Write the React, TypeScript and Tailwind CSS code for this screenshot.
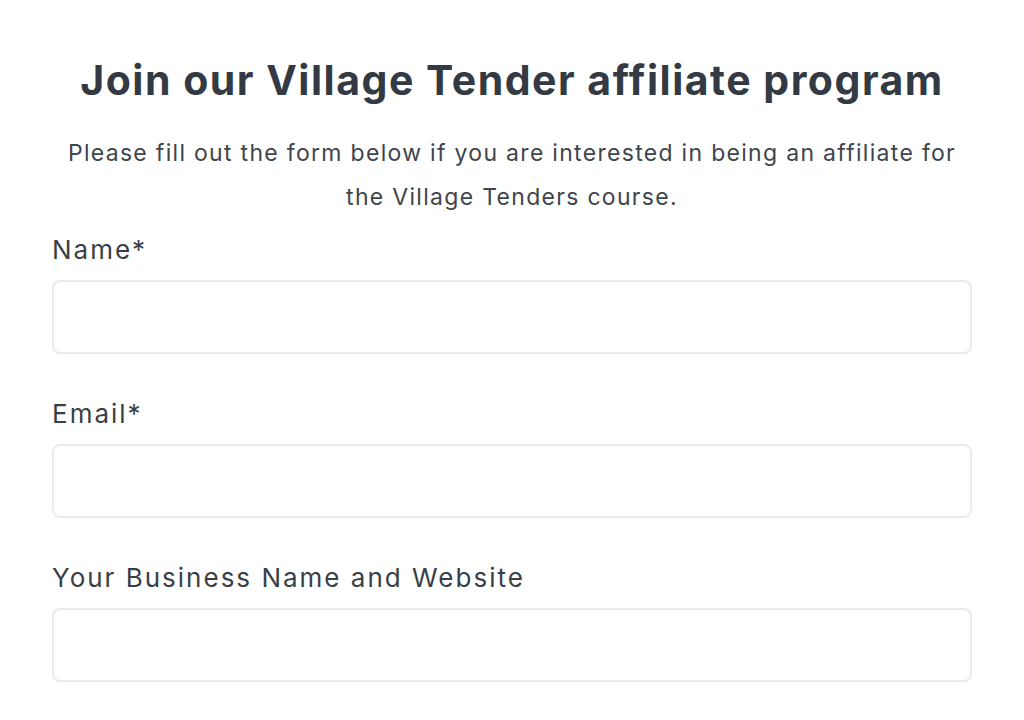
import React from 'react';

const fields = [
  { label: 'Name*', type: 'text' },
  { label: 'Email*', type: 'email' },
  { label: 'Your Business Name and Website', type: 'text' },
];

const App = () => {
  return (
    <div className="min-h-[720px] bg-white px-[52px] pt-[54px] text-[#3a3f47] font-['Inter',sans-serif] [font-variant-ligatures:none]">
      {/* Header */}
      <h1 className="text-center text-[41px] font-bold leading-[52px] tracking-[1.5px] text-[#333a44]">
        Join our Village Tender affiliate program
      </h1>
      <p className="mt-[25px] text-center text-[23px] leading-[44px] tracking-[1.3px] text-[#40454c]">
        Please fill out the form below if you are interested in being an affiliate for the Village Tenders course.
      </p>

      {/* Form */}
      <form className="mt-[11px] flex flex-col">
        {fields.map((f, i) => (
          <div key={f.label} className={i > 0 ? 'mt-[40px]' : ''}>
            <label className="block text-[26px] leading-[40px] tracking-[2px] text-[#3a3f47]">{f.label}</label>
            <input
              type={f.type}
              className="mt-[10px] block h-[74px] w-full rounded-[8px] border-2 border-[#ebebeb] bg-white px-4 text-[24px] outline-none"
            />
          </div>
        ))}
      </form>
    </div>
  );
};

export default App;
